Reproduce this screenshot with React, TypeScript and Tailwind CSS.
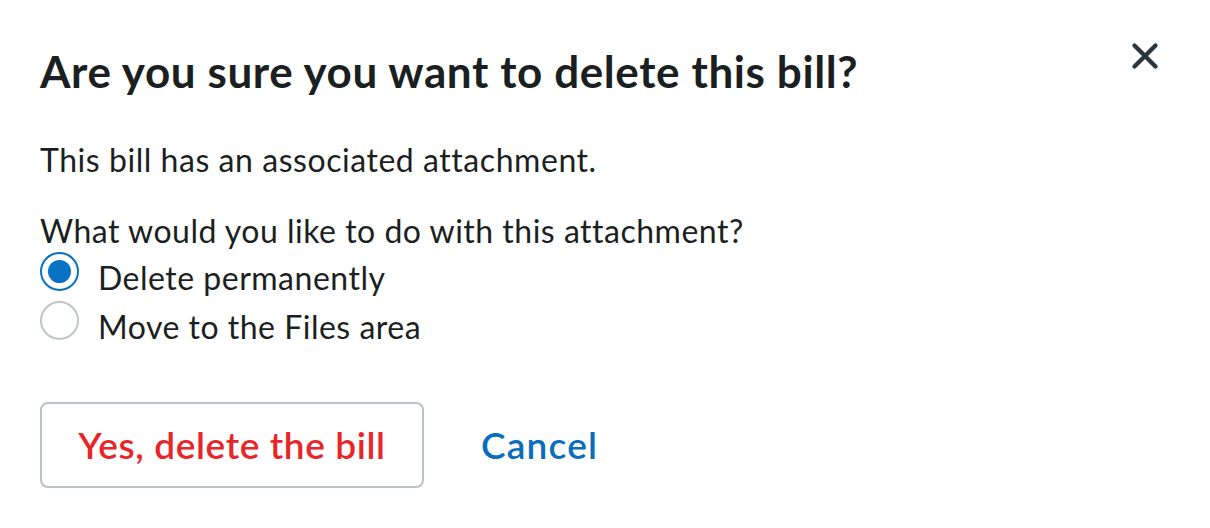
import { X } from "lucide-react";

export default function App() {
  return (
    <div className="h-[528px] w-[1210px] bg-white font-['Lato',sans-serif] text-[#1c1f22]">
      <div className="relative px-10 pt-[45px]">
        <button className="absolute right-[44px] top-[35px] text-[#2a3641]">
          <X className="size-[42px]" strokeWidth={2.5} />
        </button>
        <h1 className="text-[44px] font-bold leading-[52px] tracking-[0.6px]">
          Are you sure you want to delete this bill?
        </h1>
        <p className="mt-[43px] text-[32px] leading-[40px] tracking-[0.55px]">
          This bill has an associated attachment.
        </p>
        <p className="mt-[31px] text-[32px] leading-[40px] tracking-[0.5px]">
          What would you like to do with this attachment?
        </p>
        <div className="mt-px flex flex-col gap-[3px]">
          <label className="flex items-start gap-[19px] text-[32px] leading-[40px] tracking-[0.5px]">
            <span className="flex size-[39px] shrink-0 items-center justify-center rounded-full border-2 border-[#0a72c4]">
              <span className="size-[23px] rounded-full bg-[#0a72c4]" />
            </span>
            <span className="mt-[6px]">Delete permanently</span>
          </label>
          <label className="flex items-start gap-[19px] text-[32px] leading-[40px] tracking-[0.5px]">
            <span className="size-[39px] shrink-0 rounded-full border-2 border-[#bfc4c8]" />
            <span className="mt-[6px]">Move to the Files area</span>
          </label>
        </div>
        <div className="mt-[55px] flex items-center gap-[57px]">
          <button className="h-[86px] w-[384px] rounded-[8px] border-2 border-[#bcc1c6] text-[37px] font-semibold tracking-[0.6px] text-[#e8262a]">
            Yes, delete the bill
          </button>
          <button className="text-[37px] font-semibold tracking-[1.2px] text-[#0a6ebd]">Cancel</button>
        </div>
      </div>
    </div>
  );
}
